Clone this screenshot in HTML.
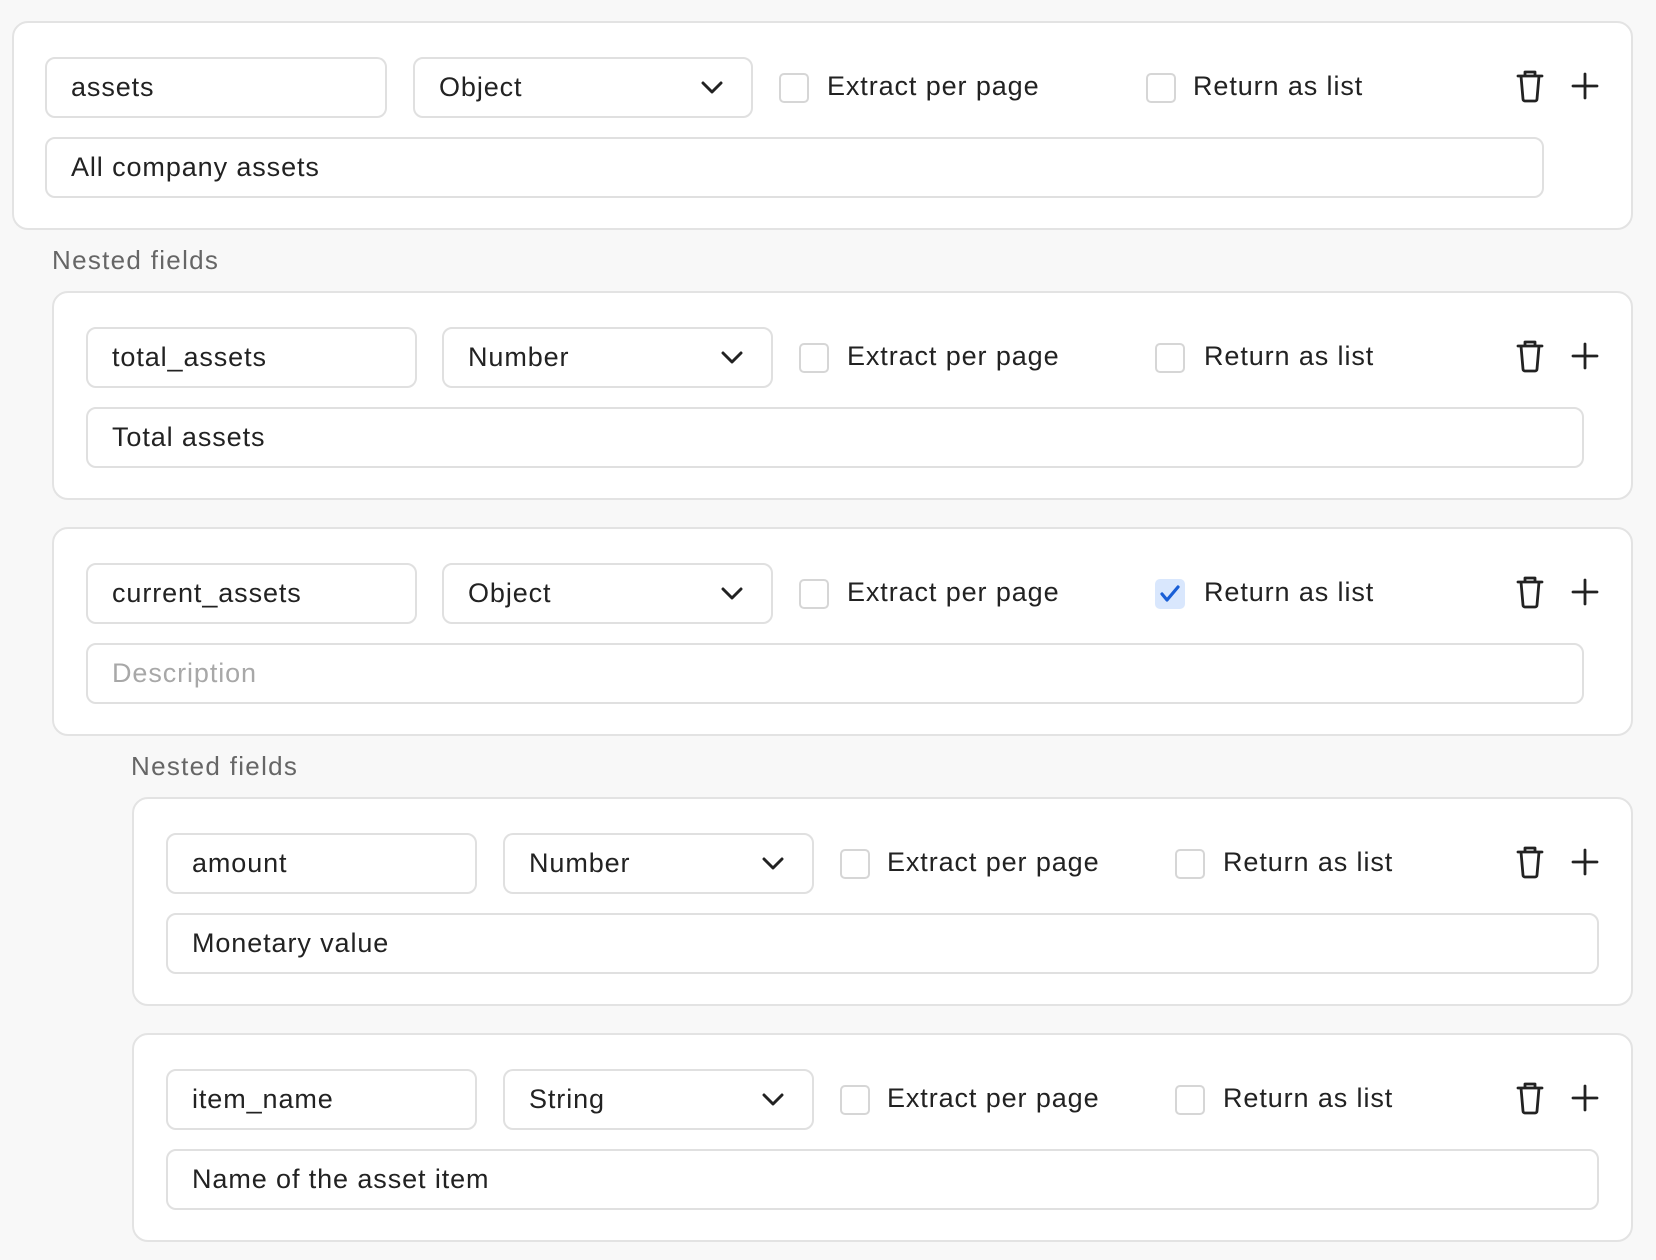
<!DOCTYPE html>
<html><head><meta charset="utf-8"><style>
*{box-sizing:border-box;margin:0;padding:0}
body{width:1656px;height:1260px;background:#f8f8f8;font-family:"Liberation Sans",Arial,sans-serif;color:#222;position:relative;overflow:hidden}
.card{position:absolute;background:#fff;border:2px solid #e3e3e3;border-radius:16px;height:209px}
.in{position:absolute;top:34px;height:61px;border:2px solid #e0e0e0;border-radius:10px;background:#fff;font-size:27px;line-height:57px;padding-left:24px;letter-spacing:0.9px}
.desc{top:114px}
.ph{color:#a8a8a8}
.chev{position:absolute;right:28px;top:20px}
.cb{position:absolute;top:50px;width:30px;height:30px;border:2px solid #d6d6d6;border-radius:5px;background:#fff}
.cb.on{background:#d9e7fd;border-color:#d9e7fd}
.lbl{position:absolute;top:33px;line-height:61px;font-size:27px;letter-spacing:0.9px}
.ic{position:absolute;top:46px}
.nf{position:absolute;font-size:26px;color:#666;letter-spacing:1.3px}
</style></head><body>

<div class="card" style="left:12px;top:21px;width:1621px">
 <div class="in" style="left:31px;width:342px">assets</div>
 <div class="in" style="left:399px;width:340px">Object<svg class="chev" width="22" height="16" viewBox="0 0 22 16"><path d="M2 4l9 9 9-9" fill="none" stroke="#222" stroke-width="3" stroke-linecap="round" stroke-linejoin="round"/></svg></div>
 <div class="cb" style="left:765px"></div><div class="lbl" style="left:813px">Extract per page</div>
 <div class="cb" style="left:1132px"></div><div class="lbl" style="left:1179px">Return as list</div>
 <svg class="ic" style="left:1500px" width="32" height="34" viewBox="0 0 32 34"><path d="M11 6V3h10v3M4 7h24M7 7l2 23a2 2 0 0 0 2 2h10a2 2 0 0 0 2-2l2-23" fill="none" stroke="#222" stroke-width="2.8" stroke-linejoin="round" stroke-linecap="round"/></svg>
 <svg class="ic" style="left:1555px" width="32" height="34" viewBox="0 0 32 34"><path d="M16 5v24M4 17h24" stroke="#222" stroke-width="2.8" stroke-linecap="round"/></svg>
 <div class="in desc" style="left:31px;width:1499px">All company assets</div>
</div>
<div class="nf" style="left:52px;top:245px">Nested fields</div>

<div class="card" style="left:52px;top:291px;width:1581px">
 <div class="in" style="left:32px;width:331px">total_assets</div>
 <div class="in" style="left:388px;width:331px">Number<svg class="chev" width="22" height="16" viewBox="0 0 22 16"><path d="M2 4l9 9 9-9" fill="none" stroke="#222" stroke-width="3" stroke-linecap="round" stroke-linejoin="round"/></svg></div>
 <div class="cb" style="left:745px"></div><div class="lbl" style="left:793px">Extract per page</div>
 <div class="cb" style="left:1101px"></div><div class="lbl" style="left:1150px">Return as list</div>
 <svg class="ic" style="left:1460px" width="32" height="34" viewBox="0 0 32 34"><path d="M11 6V3h10v3M4 7h24M7 7l2 23a2 2 0 0 0 2 2h10a2 2 0 0 0 2-2l2-23" fill="none" stroke="#222" stroke-width="2.8" stroke-linejoin="round" stroke-linecap="round"/></svg>
 <svg class="ic" style="left:1515px" width="32" height="34" viewBox="0 0 32 34"><path d="M16 5v24M4 17h24" stroke="#222" stroke-width="2.8" stroke-linecap="round"/></svg>
 <div class="in desc" style="left:32px;width:1498px">Total assets</div>
</div>

<div class="card" style="left:52px;top:527px;width:1581px">
 <div class="in" style="left:32px;width:331px">current_assets</div>
 <div class="in" style="left:388px;width:331px">Object<svg class="chev" width="22" height="16" viewBox="0 0 22 16"><path d="M2 4l9 9 9-9" fill="none" stroke="#222" stroke-width="3" stroke-linecap="round" stroke-linejoin="round"/></svg></div>
 <div class="cb" style="left:745px"></div><div class="lbl" style="left:793px">Extract per page</div>
 <div class="cb on" style="left:1101px"><svg width="26" height="26" viewBox="0 0 26 26" style="position:absolute;left:0;top:0"><path d="M5 13l5 6 11-13" fill="none" stroke="#1a5fd6" stroke-width="3.2" stroke-linecap="round" stroke-linejoin="round"/></svg></div><div class="lbl" style="left:1150px">Return as list</div>
 <svg class="ic" style="left:1460px" width="32" height="34" viewBox="0 0 32 34"><path d="M11 6V3h10v3M4 7h24M7 7l2 23a2 2 0 0 0 2 2h10a2 2 0 0 0 2-2l2-23" fill="none" stroke="#222" stroke-width="2.8" stroke-linejoin="round" stroke-linecap="round"/></svg>
 <svg class="ic" style="left:1515px" width="32" height="34" viewBox="0 0 32 34"><path d="M16 5v24M4 17h24" stroke="#222" stroke-width="2.8" stroke-linecap="round"/></svg>
 <div class="in desc ph" style="left:32px;width:1498px">Description</div>
</div>
<div class="nf" style="left:131px;top:751px">Nested fields</div>

<div class="card" style="left:132px;top:797px;width:1501px">
 <div class="in" style="left:32px;width:311px">amount</div>
 <div class="in" style="left:369px;width:311px">Number<svg class="chev" width="22" height="16" viewBox="0 0 22 16"><path d="M2 4l9 9 9-9" fill="none" stroke="#222" stroke-width="3" stroke-linecap="round" stroke-linejoin="round"/></svg></div>
 <div class="cb" style="left:706px"></div><div class="lbl" style="left:753px">Extract per page</div>
 <div class="cb" style="left:1041px"></div><div class="lbl" style="left:1089px">Return as list</div>
 <svg class="ic" style="left:1380px" width="32" height="34" viewBox="0 0 32 34"><path d="M11 6V3h10v3M4 7h24M7 7l2 23a2 2 0 0 0 2 2h10a2 2 0 0 0 2-2l2-23" fill="none" stroke="#222" stroke-width="2.8" stroke-linejoin="round" stroke-linecap="round"/></svg>
 <svg class="ic" style="left:1435px" width="32" height="34" viewBox="0 0 32 34"><path d="M16 5v24M4 17h24" stroke="#222" stroke-width="2.8" stroke-linecap="round"/></svg>
 <div class="in desc" style="left:32px;width:1433px">Monetary value</div>
</div>

<div class="card" style="left:132px;top:1033px;width:1501px">
 <div class="in" style="left:32px;width:311px">item_name</div>
 <div class="in" style="left:369px;width:311px">String<svg class="chev" width="22" height="16" viewBox="0 0 22 16"><path d="M2 4l9 9 9-9" fill="none" stroke="#222" stroke-width="3" stroke-linecap="round" stroke-linejoin="round"/></svg></div>
 <div class="cb" style="left:706px"></div><div class="lbl" style="left:753px">Extract per page</div>
 <div class="cb" style="left:1041px"></div><div class="lbl" style="left:1089px">Return as list</div>
 <svg class="ic" style="left:1380px" width="32" height="34" viewBox="0 0 32 34"><path d="M11 6V3h10v3M4 7h24M7 7l2 23a2 2 0 0 0 2 2h10a2 2 0 0 0 2-2l2-23" fill="none" stroke="#222" stroke-width="2.8" stroke-linejoin="round" stroke-linecap="round"/></svg>
 <svg class="ic" style="left:1435px" width="32" height="34" viewBox="0 0 32 34"><path d="M16 5v24M4 17h24" stroke="#222" stroke-width="2.8" stroke-linecap="round"/></svg>
 <div class="in desc" style="left:32px;width:1433px">Name of the asset item</div>
</div>

</body></html>
